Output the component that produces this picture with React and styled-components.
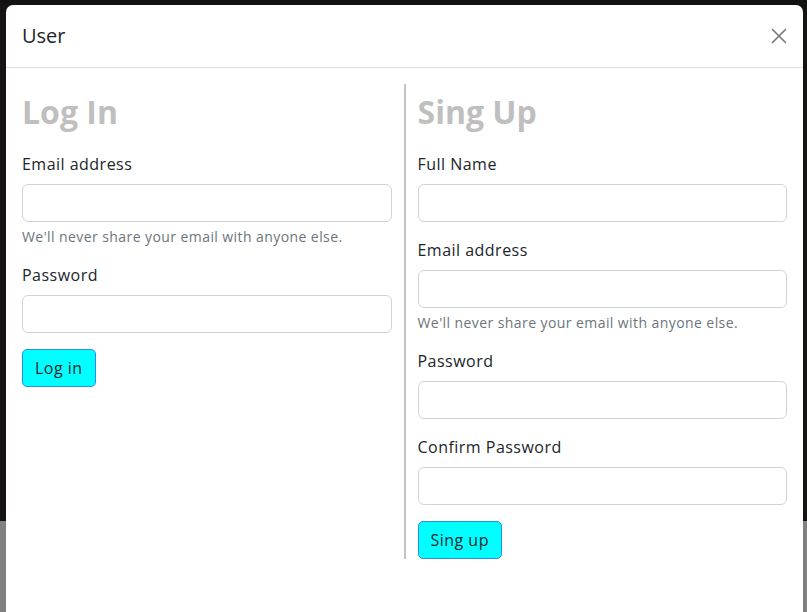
import React from 'react'
import styled, { createGlobalStyle } from 'styled-components'

const GlobalStyle = createGlobalStyle`
html, body {
    margin: 0;
    height: 100%;
    overflow: hidden;
}
body {
    font-family: "Open Sans", "Liberation Sans", sans-serif;
    color: #212529;
    background:
        linear-gradient(to bottom, transparent 0 521px, #808080 521px),
        linear-gradient(to bottom, #121212 0 5px, transparent 5px),
        linear-gradient(to right, #171312 0, #2a211e 40%, #151211 100%);
}
* {
    box-sizing: border-box;
}
`;

const Field = ({ label, help, type = 'text' }) => (
    <FieldGroup>
        <Label>{label}</Label>
        <Input type={type} />
        {help && <Help>{help}</Help>}
    </FieldGroup>
)

const App = () => {
    return (
        <>
            <GlobalStyle />
            <Modal>
                <Header>
                    <Title>User</Title>
                    <CloseBtn aria-label="Close">
                        <svg width="16" height="16" viewBox="0 0 16 16">
                            <path d="M1 1 L15 15 M15 1 L1 15" stroke="#777" strokeWidth="1.6" fill="none" />
                        </svg>
                    </CloseBtn>
                </Header>
                <Body>
                    <Column>
                        <Heading>Log In</Heading>
                        <Field label="Email address" type="email" help="We'll never share your email with anyone else." />
                        <Field label="Password" type="password" />
                        <Button>Log in</Button>
                    </Column>
                    <Divider />
                    <Column>
                        <Heading>Sing Up</Heading>
                        <Field label="Full Name" />
                        <Field label="Email address" type="email" help="We'll never share your email with anyone else." />
                        <Field label="Password" type="password" />
                        <Field label="Confirm Password" type="password" />
                        <Button>Sing up</Button>
                    </Column>
                </Body>
            </Modal>
        </>
    )
}

export default App

const Modal = styled.div`
margin: 5px 0 0 6px;
width: 797px;
min-height: 640px;
background: #fff;
border-radius: 7px;
`;

const Header = styled.div`
display: flex;
align-items: center;
justify-content: space-between;
padding: 16px;
border-bottom: 1px solid #dee2e6;
`;

const Title = styled.h5`
margin: 0;
font-size: 20px;
font-weight: 400;
line-height: 30px;
color: #212529;
`;

const CloseBtn = styled.button`
display: flex;
align-items: center;
justify-content: center;
width: 30px;
height: 30px;
margin-right: -7px;
padding: 0;
border: none;
background: transparent;
cursor: pointer;
`;

const Body = styled.div`
display: grid;
grid-template-columns: 1fr 2px 1fr;
column-gap: 12px;
padding: 16px;
`;

const Column = styled.div`
display: flex;
flex-direction: column;
align-items: flex-start;
`;

const Divider = styled.div`
background: #c4c4c4;
`;

const Heading = styled.h2`
margin: 8px 0 20px;
font-size: 32px;
line-height: 40px;
font-weight: 700;
color: #bfbfbf;
`;

const FieldGroup = styled.div`
width: 100%;
margin-bottom: 16px;
`;

const Label = styled.label`
display: block;
margin-bottom: 8px;
font-size: 16px;
line-height: 24px;
letter-spacing: 0.03em;
color: #212529;
`;

const Input = styled.input`
display: block;
width: 100%;
height: 38px;
padding: 6px 12px;
border: 1px solid #ced4da;
border-radius: 6px;
font-size: 16px;
background: #fff;
`;

const Help = styled.div`
margin-top: 4px;
font-size: 14px;
line-height: 21px;
letter-spacing: 0.03em;
color: #6c757d;
`;

const Button = styled.button`
padding: 6px 12px;
font-family: inherit;
font-size: 16px;
line-height: 24px;
letter-spacing: 0.03em;
color: #212529;
background: #00ffff;
border: 1px solid #2b8cf0;
border-radius: 5px;
cursor: pointer;
`;
